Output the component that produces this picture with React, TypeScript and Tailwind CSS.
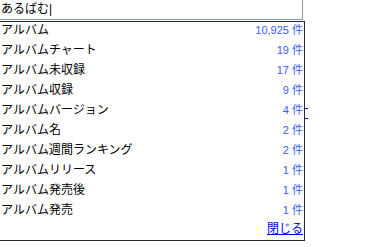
import React from 'react';

const rows = [
  { label: 'アルバム', count: '10,925' },
  { label: 'アルバムチャート', count: '19' },
  { label: 'アルバム未収録', count: '17' },
  { label: 'アルバム収録', count: '9' },
  { label: 'アルバムバージョン', count: '4' },
  { label: 'アルバム名', count: '2' },
  { label: 'アルバム週間ランキング', count: '2' },
  { label: 'アルバムリリース', count: '1' },
  { label: 'アルバム発売後', count: '1' },
  { label: 'アルバム発売', count: '1' },
];

export default function App() {
  return (
    <div className="relative w-[387px] h-[247px] overflow-hidden bg-white text-[12px] text-black font-['Liberation_Sans','Noto_Sans_CJK_JP',sans-serif]">
      {/* search input */}
      <div className="w-[303px] h-[20px] border-r border-b border-[#7f9db9] pl-[1px] pt-[2px] leading-[14px]">
        あるばむ<span className="font-light">|</span>
      </div>

      {/* suggestion dropdown */}
      <div className="mt-[1px] w-[305px] border border-l-0 border-[#2b2b2b] pb-[4px]">
        {rows.map((r) => (
          <div key={r.label} className="flex justify-between h-[20px] pt-[1px] pl-[1px] pr-[1px] leading-[14px]">
            <span>{r.label}</span>
            <span className="text-[#3a5cf5] text-[11px]">{r.count} 件</span>
          </div>
        ))}
        <div className="flex justify-end pr-[1px] leading-[14px]">
          <a className="text-[#0000ee] underline">閉じる</a>
        </div>
      </div>

      {/* scrollbar ticks */}
      <div className="absolute left-[305px] top-[108px] w-[3px] h-px bg-[#0000ee]" />
      <div className="absolute left-[305px] top-[118px] w-[3px] h-px bg-[#0000ee]" />
    </div>
  );
}
